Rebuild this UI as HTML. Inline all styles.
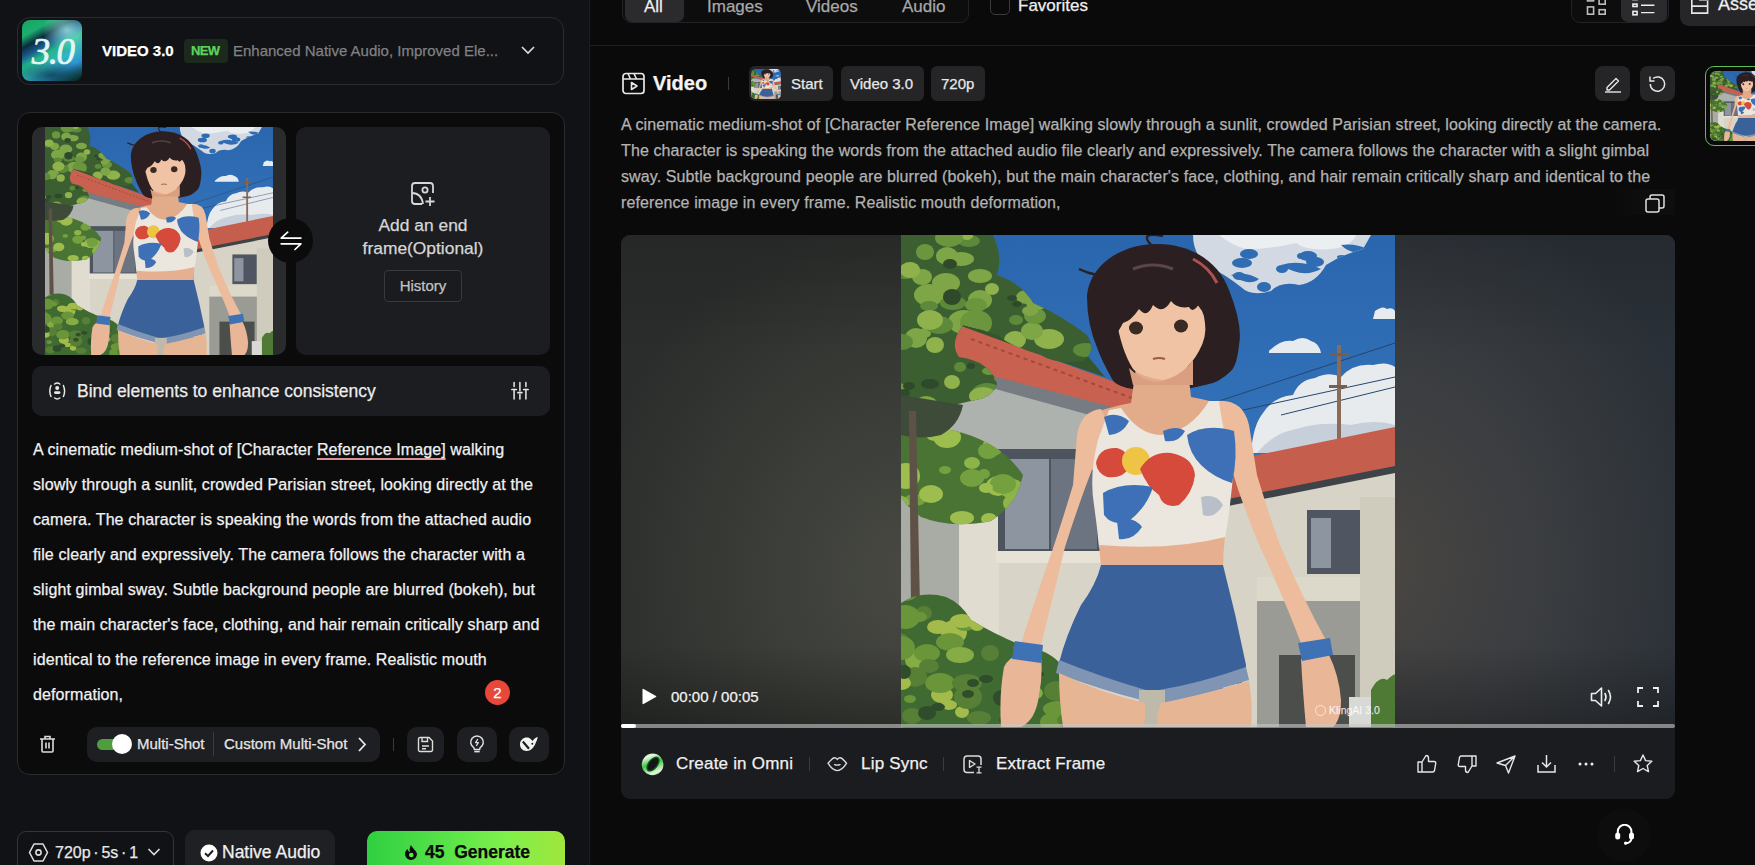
<!DOCTYPE html>
<html><head><meta charset="utf-8">
<style>
*{box-sizing:border-box;margin:0;padding:0}
html,body{width:1755px;height:865px;overflow:hidden;background:#0a0a0a;font-family:"Liberation Sans",sans-serif;color:#fff;-webkit-text-stroke:0.25px currentColor}
.a{position:absolute}
.t{white-space:nowrap;line-height:1}
#left{left:0;top:0;width:590px;height:865px;background:#111215;overflow:hidden}
#vsep{left:589px;top:0;width:1px;height:865px;background:#1d1e21}
svg{display:block}
.ib{background:#1e1f22;border-radius:10px}
</style></head><body>
<svg width="0" height="0" style="position:absolute">
<defs>
<symbol id="anime" viewBox="0 0 494 492" preserveAspectRatio="none">
  <defs>
    <linearGradient id="sky" x1="0" y1="0" x2="0" y2="1"><stop offset="0" stop-color="#2a66ae"/><stop offset="0.5" stop-color="#3474ba"/><stop offset="1" stop-color="#5a92c8"/></linearGradient>
  </defs>
  <rect width="494" height="492" fill="url(#sky)"/>
  <!-- top clouds -->
  <path d="M292 0 H470 L462 14 Q440 20 425 30 Q415 48 398 50 Q380 46 370 56 Q350 62 340 52 Q325 40 305 30 Q292 18 292 0 Z" fill="#d3d9e2"/>
  <path d="M318 0 H455 Q450 12 430 14 Q405 16 395 8 Q370 14 345 14 Q330 10 318 0 Z" fill="#eceff2"/>
  <clipPath id="cc1"><path d="M292 0 H470 L462 14 Q440 20 425 30 Q415 48 398 50 Q380 46 370 56 Q350 62 340 52 Q325 40 305 30 Q292 18 292 0 Z"/></clipPath><g clip-path="url(#cc1)"><path d="M330 40 Q345 36 358 44 Q348 52 330 40 Z M380 30 Q400 24 420 34 Q402 44 380 30 Z M440 10 Q455 8 466 14 Q452 22 440 10 Z" fill="#2f6cb3"/><ellipse cx="338" cy="41" rx="6" ry="4" fill="#2f6cb3"/><ellipse cx="400" cy="21" rx="4" ry="3" fill="#2f6cb3"/><ellipse cx="341" cy="28" rx="10" ry="5" fill="#2f6cb3"/><ellipse cx="434" cy="38" rx="8" ry="3" fill="#2f6cb3"/><ellipse cx="402" cy="54" rx="7" ry="4" fill="#2f6cb3"/><ellipse cx="407" cy="21" rx="9" ry="5" fill="#2f6cb3"/><ellipse cx="348" cy="19" rx="9" ry="5" fill="#2f6cb3"/><ellipse cx="415" cy="55" rx="8" ry="6" fill="#2f6cb3"/><ellipse cx="363" cy="52" rx="7" ry="5" fill="#2f6cb3"/><ellipse cx="441" cy="22" rx="5" ry="2" fill="#2f6cb3"/><ellipse cx="454" cy="36" rx="8" ry="4" fill="#2f6cb3"/><ellipse cx="381" cy="34" rx="6" ry="4" fill="#2f6cb3"/><ellipse cx="393" cy="56" rx="8" ry="5" fill="#2f6cb3"/><ellipse cx="437" cy="60" rx="8" ry="4" fill="#2f6cb3"/><ellipse cx="438" cy="59" rx="9" ry="5" fill="#2f6cb3"/><ellipse cx="414" cy="27" rx="9" ry="5" fill="#2f6cb3"/></g>
  <path d="M474 76 Q482 70 486 74 Q492 72 494 76 V84 H472 Z" fill="#e6ebf0"/>
  <path d="M368 116 Q380 104 392 106 Q402 100 410 106 Q418 108 420 118 H368 Z" fill="#e6ebf0"/>
  <!-- lower clouds -->
  <path d="M350 218 Q352 190 362 178 Q372 162 392 160 Q398 145 414 143 Q428 136 440 142 Q452 128 472 130 Q486 126 494 132 V218 Z" fill="#e8ebee"/>
  <path d="M356 218 Q372 198 395 194 Q420 186 450 190 Q475 184 494 190 V218 Z" fill="#c7d0da"/>
  <!-- wires & pole -->
  <path d="M300 172 L494 108 M310 182 L494 142 M380 180 L494 152" stroke="#26466e" stroke-width="1" fill="none"/>
  <rect x="436" y="110" width="4" height="98" fill="#8a6b58"/>
  <rect x="428" y="118" width="20" height="3" fill="#7a5e4d"/>
  <rect x="428" y="150" width="18" height="3" fill="#7a5e4d"/>
  <!-- right roof -->
  <path d="M322 227 L494 192 V236 L322 271 Z" fill="#c55e4d"/>
  <path d="M322 265 L494 231 V241 L322 275 Z" fill="#3e4347"/>
  <!-- right building -->
  <path d="M322 272 L494 238 V492 H322 Z" fill="#d7d3c6"/>
  <rect x="406" y="275" width="53" height="64" fill="#4f5661"/>
  <rect x="410" y="283" width="20" height="50" fill="#8d96a0"/>
  <rect x="459" y="262" width="35" height="230" fill="#cfcbbd"/>
  <rect x="356" y="342" width="103" height="24" fill="#dcd8ca"/>
  <rect x="356" y="366" width="103" height="126" fill="#9a9b95"/>
  <rect x="378" y="420" width="76" height="72" fill="#4c4e4c"/>
  <rect x="448" y="462" width="30" height="30" fill="#d8d8d4"/>
  <path d="M470 492 V455 Q478 440 486 445 Q494 438 494 440 V492 Z" fill="#4f7a35"/>
  <!-- left building -->
  <path d="M0 140 L250 178 V492 H0 Z" fill="#d8d5c8"/>
  <rect x="0" y="150" width="58" height="280" fill="#a9aba5"/>
  <rect x="58" y="150" width="40" height="300" fill="#e0ddd0"/>
  <path d="M0 148 L80 148 L250 190 V218 H0 Z" fill="#aeb2ae"/>
  <rect x="97" y="214" width="105" height="104" fill="#4d545e"/>
  <rect x="104" y="224" width="44" height="90" fill="#8c95a0"/>
  <rect x="150" y="224" width="46" height="90" fill="#6b7480"/>
  <rect x="95" y="316" width="112" height="12" fill="#e6e2d5"/>
  <path d="M48 80 L96 94 Q140 112 186 120 L204 142 L52 90 Z" fill="#34552e"/>
  <!-- left roof -->
  <path d="M52 88 L250 160 V184 L225 182 L40 126 Z" fill="#c8614f"/>
  <path d="M70 104 L250 170" stroke="#a4483b" stroke-width="2" stroke-dasharray="4 4"/>
  <path d="M80 138 L250 182 V192 L225 190 L80 150 Z" fill="#767c82"/>
  <!-- trees -->
  <clipPath id="tc1"><path d="M0 0 H92 Q102 22 96 40 Q120 48 132 68 Q160 80 186 100 Q196 116 182 126 Q155 130 140 120 Q112 112 96 100 Q80 94 62 90 Q48 108 58 122 Q88 126 96 148 Q94 162 70 166 Q45 172 0 182 Z"/></clipPath>
  <clipPath id="tc2"><path d="M0 196 Q30 188 62 198 Q102 210 122 240 Q116 270 90 286 Q50 294 20 282 Q6 272 0 262 Z"/></clipPath>
  <clipPath id="tc3"><path d="M0 368 Q20 355 45 362 Q60 368 70 385 Q95 400 120 410 Q150 415 162 432 V492 H0 Z"/></clipPath>
  <path d="M0 0 H92 Q102 22 96 40 Q120 48 132 68 Q160 80 186 100 Q196 116 182 126 Q155 130 140 120 Q112 112 96 100 Q80 94 62 90 Q48 108 58 122 Q88 126 96 148 Q94 162 70 166 Q45 172 0 182 Z" fill="#3c5f31"/>
  <g clip-path="url(#tc1)"><ellipse cx="60" cy="24" rx="13" ry="7" fill="#7fa646"/><ellipse cx="68" cy="6" rx="11" ry="6" fill="#5c8a3a"/><ellipse cx="79" cy="41" rx="12" ry="7" fill="#7fa646"/><ellipse cx="184" cy="115" rx="12" ry="7" fill="#5c8a3a"/><ellipse cx="5" cy="37" rx="12" ry="7" fill="#5c8a3a"/><ellipse cx="24" cy="17" rx="9" ry="8" fill="#6b963e"/><ellipse cx="16" cy="104" rx="8" ry="5" fill="#7fa646"/><ellipse cx="108" cy="113" rx="11" ry="8" fill="#8fb24c"/><ellipse cx="88" cy="170" rx="10" ry="6" fill="#6b963e"/><ellipse cx="135" cy="41" rx="12" ry="9" fill="#8fb24c"/><ellipse cx="141" cy="50" rx="16" ry="9" fill="#5c8a3a"/><ellipse cx="28" cy="60" rx="15" ry="11" fill="#7fa646"/><ellipse cx="148" cy="104" rx="15" ry="10" fill="#8fb24c"/><ellipse cx="114" cy="105" rx="11" ry="9" fill="#8fb24c"/><ellipse cx="90" cy="121" rx="7" ry="5" fill="#5c8a3a"/><ellipse cx="52" cy="68" rx="13" ry="7" fill="#5c8a3a"/><ellipse cx="66" cy="111" rx="11" ry="7" fill="#8fb24c"/><ellipse cx="21" cy="42" rx="10" ry="8" fill="#7fa646"/><ellipse cx="28" cy="71" rx="9" ry="5" fill="#5c8a3a"/><ellipse cx="168" cy="48" rx="10" ry="7" fill="#5c8a3a"/><ellipse cx="187" cy="24" rx="8" ry="5" fill="#6b963e"/><ellipse cx="-3" cy="153" rx="8" ry="5" fill="#6b963e"/><ellipse cx="79" cy="65" rx="12" ry="10" fill="#7fa646"/><ellipse cx="86" cy="160" rx="16" ry="12" fill="#5c8a3a"/><ellipse cx="75" cy="70" rx="11" ry="7" fill="#6b963e"/><ellipse cx="8" cy="35" rx="8" ry="5" fill="#7fa646"/><ellipse cx="15" cy="103" rx="11" ry="10" fill="#7fa646"/><ellipse cx="9" cy="35" rx="10" ry="8" fill="#8fb24c"/><ellipse cx="115" cy="85" rx="7" ry="5" fill="#5c8a3a"/><ellipse cx="91" cy="54" rx="7" ry="6" fill="#8fb24c"/><ellipse cx="91" cy="126" rx="11" ry="7" fill="#8fb24c"/><ellipse cx="24" cy="98" rx="6" ry="5" fill="#7fa646"/><ellipse cx="134" cy="45" rx="10" ry="6" fill="#6b963e"/><ellipse cx="102" cy="143" rx="9" ry="6" fill="#6b963e"/><ellipse cx="156" cy="150" rx="13" ry="8" fill="#5c8a3a"/><ellipse cx="66" cy="1" rx="6" ry="4" fill="#8fb24c"/><ellipse cx="34" cy="110" rx="9" ry="8" fill="#8fb24c"/><ellipse cx="186" cy="64" rx="8" ry="5" fill="#6b963e"/><ellipse cx="63" cy="87" rx="16" ry="12" fill="#7fa646"/><ellipse cx="91" cy="119" rx="14" ry="8" fill="#7fa646"/><ellipse cx="177" cy="144" rx="14" ry="10" fill="#6b963e"/><ellipse cx="82" cy="116" rx="7" ry="6" fill="#5c8a3a"/><ellipse cx="88" cy="136" rx="7" ry="4" fill="#6b963e"/><ellipse cx="1" cy="107" rx="11" ry="8" fill="#5c8a3a"/><ellipse cx="126" cy="62" rx="11" ry="7" fill="#7fa646"/><ellipse cx="155" cy="133" rx="7" ry="6" fill="#6b963e"/><ellipse cx="82" cy="161" rx="14" ry="9" fill="#8fb24c"/><ellipse cx="38" cy="90" rx="14" ry="9" fill="#5c8a3a"/><ellipse cx="162" cy="7" rx="13" ry="12" fill="#5c8a3a"/><ellipse cx="160" cy="162" rx="7" ry="4" fill="#7fa646"/><ellipse cx="170" cy="143" rx="12" ry="10" fill="#6b963e"/><ellipse cx="29" cy="85" rx="13" ry="10" fill="#8fb24c"/><ellipse cx="131" cy="96" rx="11" ry="9" fill="#7fa646"/><ellipse cx="45" cy="48" rx="14" ry="10" fill="#7fa646"/><ellipse cx="147" cy="168" rx="10" ry="8" fill="#6b963e"/><ellipse cx="134" cy="81" rx="11" ry="8" fill="#6b963e"/><ellipse cx="135" cy="162" rx="15" ry="10" fill="#6b963e"/><ellipse cx="163" cy="21" rx="7" ry="5" fill="#7fa646"/><ellipse cx="129" cy="76" rx="8" ry="5" fill="#7fa646"/><ellipse cx="174" cy="24" rx="13" ry="10" fill="#6b963e"/><ellipse cx="46" cy="21" rx="11" ry="9" fill="#7fa646"/><ellipse cx="75" cy="88" rx="16" ry="13" fill="#6b963e"/><ellipse cx="136" cy="184" rx="10" ry="7" fill="#8fb24c"/><ellipse cx="59" cy="132" rx="6" ry="5" fill="#5c8a3a"/><ellipse cx="136" cy="68" rx="11" ry="7" fill="#7fa646"/><ellipse cx="18" cy="170" rx="8" ry="7" fill="#7fa646"/><ellipse cx="48" cy="3" rx="14" ry="9" fill="#6b963e"/><ellipse cx="159" cy="156" rx="13" ry="11" fill="#5c8a3a"/><ellipse cx="25" cy="170" rx="12" ry="9" fill="#7fa646"/><ellipse cx="51" cy="147" rx="8" ry="7" fill="#8fb24c"/><ellipse cx="112" cy="122" rx="8" ry="5" fill="#2e4a2a"/><ellipse cx="3" cy="158" rx="6" ry="4" fill="#2e4a2a"/><ellipse cx="111" cy="63" rx="5" ry="3" fill="#2e4a2a"/><ellipse cx="112" cy="175" rx="5" ry="3" fill="#2e4a2a"/><ellipse cx="74" cy="105" rx="5" ry="4" fill="#2e4a2a"/><ellipse cx="29" cy="149" rx="9" ry="5" fill="#2e4a2a"/><ellipse cx="87" cy="108" rx="5" ry="4" fill="#2e4a2a"/><ellipse cx="8" cy="151" rx="6" ry="4" fill="#2e4a2a"/><ellipse cx="116" cy="69" rx="5" ry="3" fill="#2e4a2a"/><ellipse cx="99" cy="133" rx="7" ry="5" fill="#2e4a2a"/><ellipse cx="118" cy="154" rx="4" ry="3" fill="#2e4a2a"/><ellipse cx="49" cy="29" rx="7" ry="5" fill="#2e4a2a"/><ellipse cx="70" cy="131" rx="4" ry="3" fill="#2e4a2a"/><ellipse cx="51" cy="62" rx="9" ry="8" fill="#2e4a2a"/></g>
  <path d="M0 196 Q30 188 62 198 Q102 210 122 240 Q116 270 90 286 Q50 294 20 282 Q6 272 0 262 Z" fill="#4a7434"/>
  <g clip-path="url(#tc2)"><ellipse cx="27" cy="291" rx="8" ry="6" fill="#8db448"/><ellipse cx="39" cy="194" rx="8" ry="6" fill="#8db448"/><ellipse cx="61" cy="186" rx="8" ry="5" fill="#9dbd4e"/><ellipse cx="71" cy="228" rx="8" ry="6" fill="#8db448"/><ellipse cx="71" cy="243" rx="12" ry="9" fill="#74a040"/><ellipse cx="97" cy="251" rx="12" ry="10" fill="#9dbd4e"/><ellipse cx="14" cy="265" rx="11" ry="6" fill="#74a040"/><ellipse cx="111" cy="254" rx="12" ry="10" fill="#8db448"/><ellipse cx="113" cy="268" rx="11" ry="9" fill="#8db448"/><ellipse cx="102" cy="249" rx="13" ry="10" fill="#74a040"/><ellipse cx="79" cy="194" rx="6" ry="5" fill="#8db448"/><ellipse cx="44" cy="235" rx="6" ry="4" fill="#74a040"/><ellipse cx="83" cy="239" rx="6" ry="5" fill="#74a040"/><ellipse cx="116" cy="284" rx="7" ry="5" fill="#74a040"/><ellipse cx="91" cy="213" rx="7" ry="4" fill="#74a040"/><ellipse cx="93" cy="210" rx="11" ry="8" fill="#9dbd4e"/><ellipse cx="5" cy="285" rx="8" ry="5" fill="#74a040"/><ellipse cx="79" cy="194" rx="7" ry="5" fill="#74a040"/><ellipse cx="85" cy="253" rx="7" ry="5" fill="#9dbd4e"/><ellipse cx="30" cy="259" rx="12" ry="9" fill="#9dbd4e"/><ellipse cx="87" cy="216" rx="10" ry="8" fill="#74a040"/><ellipse cx="21" cy="293" rx="13" ry="8" fill="#9dbd4e"/><ellipse cx="5" cy="241" rx="14" ry="13" fill="#9dbd4e"/><ellipse cx="22" cy="289" rx="8" ry="6" fill="#8db448"/><ellipse cx="92" cy="214" rx="9" ry="7" fill="#74a040"/><ellipse cx="61" cy="283" rx="12" ry="7" fill="#9dbd4e"/><ellipse cx="46" cy="202" rx="14" ry="11" fill="#9dbd4e"/><ellipse cx="34" cy="200" rx="9" ry="6" fill="#9dbd4e"/><ellipse cx="-5" cy="268" rx="13" ry="8" fill="#8db448"/><ellipse cx="88" cy="284" rx="8" ry="6" fill="#9dbd4e"/></g>
  <path d="M0 160 Q30 165 62 170 Q58 190 40 200 Q20 205 0 200 Z" fill="#3e4b38"/>
  <path d="M8 176 L15 176 L19 372 H10 Z" fill="#5e5246"/>
  <path d="M0 368 Q20 355 45 362 Q60 368 70 385 Q95 400 120 410 Q150 415 162 432 V492 H0 Z" fill="#3f6a32"/>
  <g clip-path="url(#tc3)"><ellipse cx="61" cy="477" rx="7" ry="6" fill="#a2bb4a"/><ellipse cx="140" cy="394" rx="7" ry="5" fill="#86ac45"/><ellipse cx="37" cy="392" rx="11" ry="7" fill="#a2bb4a"/><ellipse cx="128" cy="415" rx="6" ry="5" fill="#577f35"/><ellipse cx="150" cy="487" rx="11" ry="9" fill="#6a9639"/><ellipse cx="154" cy="413" rx="12" ry="7" fill="#a2bb4a"/><ellipse cx="78" cy="483" rx="12" ry="7" fill="#577f35"/><ellipse cx="53" cy="397" rx="13" ry="12" fill="#a2bb4a"/><ellipse cx="64" cy="388" rx="11" ry="8" fill="#6a9639"/><ellipse cx="23" cy="378" rx="8" ry="7" fill="#577f35"/><ellipse cx="89" cy="418" rx="9" ry="8" fill="#577f35"/><ellipse cx="19" cy="382" rx="7" ry="5" fill="#6a9639"/><ellipse cx="49" cy="407" rx="14" ry="9" fill="#6a9639"/><ellipse cx="122" cy="413" rx="10" ry="7" fill="#577f35"/><ellipse cx="41" cy="460" rx="11" ry="8" fill="#a2bb4a"/><ellipse cx="16" cy="425" rx="12" ry="10" fill="#86ac45"/><ellipse cx="11" cy="481" rx="10" ry="8" fill="#577f35"/><ellipse cx="157" cy="474" rx="15" ry="8" fill="#6a9639"/><ellipse cx="67" cy="462" rx="14" ry="12" fill="#577f35"/><ellipse cx="-5" cy="410" rx="15" ry="13" fill="#577f35"/><ellipse cx="160" cy="390" rx="7" ry="4" fill="#6a9639"/><ellipse cx="155" cy="456" rx="12" ry="10" fill="#577f35"/><ellipse cx="9" cy="464" rx="6" ry="4" fill="#6a9639"/><ellipse cx="105" cy="398" rx="7" ry="5" fill="#577f35"/><ellipse cx="114" cy="371" rx="7" ry="5" fill="#86ac45"/><ellipse cx="61" cy="386" rx="12" ry="7" fill="#a2bb4a"/><ellipse cx="164" cy="394" rx="9" ry="8" fill="#86ac45"/><ellipse cx="76" cy="388" rx="8" ry="8" fill="#a2bb4a"/><ellipse cx="4" cy="382" rx="15" ry="12" fill="#6a9639"/><ellipse cx="39" cy="448" rx="15" ry="10" fill="#6a9639"/><ellipse cx="113" cy="456" rx="10" ry="7" fill="#6a9639"/><ellipse cx="131" cy="458" rx="11" ry="7" fill="#86ac45"/><ellipse cx="48" cy="470" rx="8" ry="5" fill="#a2bb4a"/><ellipse cx="14" cy="442" rx="12" ry="10" fill="#577f35"/><ellipse cx="66" cy="448" rx="15" ry="9" fill="#577f35"/><ellipse cx="4" cy="358" rx="12" ry="8" fill="#6a9639"/><ellipse cx="26" cy="418" rx="13" ry="9" fill="#6a9639"/><ellipse cx="165" cy="485" rx="9" ry="6" fill="#577f35"/><ellipse cx="0" cy="448" rx="10" ry="7" fill="#a2bb4a"/><ellipse cx="70" cy="370" rx="7" ry="4" fill="#577f35"/><ellipse cx="157" cy="372" rx="16" ry="10" fill="#a2bb4a"/><ellipse cx="126" cy="398" rx="14" ry="8" fill="#577f35"/><ellipse cx="28" cy="431" rx="10" ry="7" fill="#577f35"/><ellipse cx="0" cy="413" rx="14" ry="12" fill="#6a9639"/><ellipse cx="59" cy="420" rx="14" ry="8" fill="#86ac45"/><ellipse cx="105" cy="485" rx="7" ry="4" fill="#2f4d2b"/><ellipse cx="37" cy="472" rx="7" ry="4" fill="#2f4d2b"/><ellipse cx="101" cy="463" rx="9" ry="8" fill="#2f4d2b"/><ellipse cx="3" cy="437" rx="7" ry="7" fill="#2f4d2b"/><ellipse cx="111" cy="486" rx="9" ry="5" fill="#2f4d2b"/><ellipse cx="26" cy="478" rx="9" ry="7" fill="#2f4d2b"/><ellipse cx="85" cy="444" rx="7" ry="4" fill="#2f4d2b"/><ellipse cx="72" cy="448" rx="6" ry="4" fill="#2f4d2b"/><ellipse cx="67" cy="459" rx="6" ry="4" fill="#2f4d2b"/><ellipse cx="138" cy="439" rx="5" ry="3" fill="#2f4d2b"/></g>
  <!-- hair back -->
  <path d="M186 62 C188 30 220 9 256 9 C292 9 318 28 328 55 Q342 90 338 110 Q336 130 330 136 Q318 148 304 150 Q280 156 260 156 Q240 156 226 153 Q214 150 211 144 Q200 124 197 115 Q186 90 186 62 Z" fill="#2b1f21"/><path d="M252 12 Q236 -4 262 1 M196 40 Q186 38 178 34" fill="none" stroke="#2b1f21" stroke-width="2.5"/>
  <!-- neck & chest -->
  <path d="M237 118 H285 L290 162 Q312 166 330 172 L330 235 H185 V182 Q205 172 230 168 Z" fill="#e2ab89"/>
  <!-- arms -->
  <path d="M200 174 Q180 176 176 200 L172 250 Q160 290 149 322 Q132 370 118 415 L138 418 Q150 370 164 312 Q178 268 192 232 Q198 210 208 190 Z" fill="#ecbc9c"/>
  <path d="M316 166 Q342 164 348 190 L356 240 Q368 280 379 310 Q400 360 427 409 L403 416 Q382 360 359 312 Q342 272 330 232 Q324 200 318 180 Z" fill="#ecbc9c"/>
  <path d="M103 432 Q110 418 125 420 L140 422 Q142 440 138 460 Q135 485 120 492 H100 Q98 460 103 432 Z" fill="#e9b797"/>
  <path d="M400 424 L428 420 Q438 440 440 465 Q440 485 432 492 H405 Q402 460 400 424 Z" fill="#e9b797"/>
  <path d="M114 406 L142 410 L140 428 L111 424 Z" fill="#3f72b5"/>
  <path d="M397 408 L429 403 L432 420 L401 426 Z" fill="#3f72b5"/>
  <!-- face -->
  <path d="M215 82 Q215 60 258 58 Q303 60 304 88 Q306 102 298 116 Q285 140 262 145 Q240 142 232 134 Q220 115 215 82 Z" fill="#efc3a3"/>
  <path d="M228 133 Q245 150 262 146 Q280 142 292 125 L292 150 L232 150 Z" fill="#d99f80"/>
  <ellipse cx="235" cy="93" rx="7" ry="6.5" fill="#3a2a24"/>
  <ellipse cx="280" cy="91" rx="7" ry="6.5" fill="#3a2a24"/>
  <path d="M252 124 Q258 122 264 124" stroke="#9c5a4a" stroke-width="2" fill="none"/>
  <!-- bangs -->
  <path d="M190 70 C194 36 222 14 256 14 C296 14 318 34 328 60 L322 88 Q306 76 300 66 Q292 80 288 72 Q276 74 270 66 Q262 80 252 70 Q246 84 238 74 Q230 86 222 88 Q218 96 214 100 Z" fill="#2b1f21"/>
  <path d="M232 34 Q252 26 272 34" stroke="#5a4548" stroke-width="3" fill="none"/>
  <path d="M292 24 Q308 32 316 48" stroke="#b05050" stroke-width="3" fill="none"/>
  <!-- tank top -->
  <path d="M208 175 L220 173 Q238 200 260 200 Q290 196 308 166 L318 166 Q322 200 333 228 Q330 270 324 304 Q270 318 198 313 Q196 290 193 270 Q188 240 197 205 Z" fill="#ebe7df"/>
  <path d="M195 228 Q198 212 216 213 Q228 216 229 232 Q222 244 206 242 Q196 238 195 228 Z" fill="#d64a3c"/>
  <circle cx="235" cy="226" r="14" fill="#eec444"/>
  <path d="M239 234 Q250 216 270 218 Q292 222 294 240 Q292 258 278 270 Q262 274 258 260 Q246 252 239 234 Z" fill="#d64a3c"/>
  <path d="M202 258 Q222 246 252 252 Q246 272 228 286 Q212 292 203 280 Z" fill="#3d70b6"/>
  <path d="M286 200 Q305 188 333 196 Q337 222 331 248 Q312 242 300 230 Q288 218 286 200 Z" fill="#3d70b6"/>
  <path d="M203 182 Q216 176 228 186 Q222 199 208 200 Z" fill="#3d70b6"/>
  <path d="M262 196 Q276 190 284 196 Q278 208 264 206 Z" fill="#3d70b6"/>
  <path d="M216 286 Q232 280 241 292 Q232 306 218 304 Z" fill="#3d70b6"/>
  <path d="M300 262 Q315 258 322 270 Q314 284 302 280 Z" fill="#b9bfc8"/>
  <!-- midriff -->
  <path d="M198 310 Q270 316 324 302 Q322 318 322 332 H200 Z" fill="#e6b090"/>
  <!-- shorts -->
  <path d="M200 330 H322 Q335 380 345 430 Q345 445 340 448 Q300 455 258 466 L250 470 Q245 458 240 455 Q200 445 158 428 Q165 400 180 370 Q195 350 200 330 Z" fill="#3a6199"/>
  <path d="M158 425 Q200 442 245 455 L244 466 Q200 455 155 438 Z" fill="#7f95b3"/>
  <path d="M258 455 Q300 448 345 432 L348 445 Q300 460 260 468 Z" fill="#7f95b3"/>
  <!-- legs -->
  <rect x="238" y="455" width="26" height="37" fill="#bdb9ab"/>
  <path d="M158 438 Q200 458 244 468 Q245 480 243 492 H162 Q158 465 158 438 Z" fill="#e6b593"/>
  <path d="M260 468 Q300 460 348 446 Q352 470 350 492 H256 Q255 480 260 468 Z" fill="#e6b593"/>
</symbol>














</defs>
</svg>

<div id="left" class="a">
  <!-- model card -->
  <div class="a" style="left:17px;top:17px;width:547px;height:68px;border:1px solid #2b2c30;border-radius:13px;background:#111215"></div>
  <div class="a" id="logo" style="left:22px;top:20px;width:60px;height:61px;border-radius:8px;overflow:hidden;background:linear-gradient(150deg,#17a35c 0%,#1cae70 18%,#0b2c3c 30%,#1a5a8a 40%,#22b68a 50%,#33b6c4 64%,#2d92d2 78%,#0b3d37 94%,#072a26 100%)">
    <div class="a" style="left:20px;top:-10px;width:50px;height:40px;border-radius:50%;background:radial-gradient(closest-side,rgba(170,245,240,0.75),rgba(120,220,220,0))"></div>
    <div class="a" style="left:-10px;top:40px;width:80px;height:30px;background:radial-gradient(closest-side,rgba(0,30,30,0.6),rgba(0,30,30,0))"></div>
  </div>
  <div class="a t" style="left:22px;top:33px;width:61px;text-align:center;font-family:'Liberation Serif',serif;font-style:italic;font-size:37px;color:#e4f7f0;letter-spacing:-1.5px;-webkit-text-stroke:0.7px #e4f7f0">3.0</div>
  <div id="tv3" class="a t" style="left:102px;top:43px;font-size:15px;font-weight:bold;color:#fff">VIDEO 3.0</div>
  <div class="a" style="left:184px;top:39px;width:44px;height:24px;border-radius:4px;background:#1b2a1c"></div>
  <div id="tnew" class="a t" style="left:191px;top:44px;font-size:13px;font-weight:bold;color:#5fd35b;letter-spacing:-0.6px">NEW</div>
  <div id="tenh" class="a t" style="left:233px;top:43px;font-size:15px;color:#808184">Enhanced Native Audio, Improved Ele...</div>
  <svg class="a" style="left:520px;top:44px" width="16" height="12" viewBox="0 0 16 12"><path d="M2 3 L8 9 L14 3" fill="none" stroke="#ddd" stroke-width="1.6"/></svg>

  <!-- main card -->
  <div class="a" style="left:17px;top:112px;width:548px;height:663px;border:1px solid #2a2b2f;border-radius:13px;background:#0b0b0c"></div>
  <!-- start frame -->
  <div class="a" style="left:32px;top:127px;width:254px;height:228px;border-radius:10px;background:#2a2b2d;overflow:hidden">
    <svg class="a" style="left:13px;top:0" width="228" height="228"><use href="#anime"/></svg>
  </div>
  <!-- end frame -->
  <div class="a" style="left:296px;top:127px;width:254px;height:228px;border-radius:10px;background:#1c1d20"></div>
  <svg class="a" style="left:409px;top:180px" width="28" height="28" viewBox="0 0 28 28"><path d="M13 24 H6 a3 3 0 0 1 -3 -3 V6 a3 3 0 0 1 3 -3 H21 a3 3 0 0 1 3 3 V13" fill="none" stroke="#d8d8d8" stroke-width="1.8"/><path d="M3 13 C9 13 13 17 14 24" fill="none" stroke="#d8d8d8" stroke-width="1.8"/><circle cx="16" cy="10" r="2.6" fill="none" stroke="#d8d8d8" stroke-width="1.8"/><path d="M21 17 V26 M16.5 21.5 H25.5" stroke="#d8d8d8" stroke-width="1.8"/></svg>
  <div id="tadd1" class="a t" style="left:296px;width:254px;text-align:center;top:217px;font-size:17.4px;color:#d6d6d6">Add an end</div>
  <div id="tadd2" class="a t" style="left:296px;width:254px;text-align:center;top:240px;font-size:17.4px;color:#d6d6d6">frame(Optional)</div>
  <div class="a" style="left:384px;top:270px;width:78px;height:32px;border:1px solid #38393d;border-radius:4px;background:#1a1b1e"></div>
  <div id="thist" class="a t" style="left:384px;width:78px;text-align:center;top:278px;font-size:15px;color:#c2c2c2">History</div>
  <!-- swap -->
  <div class="a" style="left:268px;top:218px;width:45px;height:45px;border-radius:50%;background:#0b0b0c"></div>
  <svg class="a" style="left:280px;top:230px" width="22" height="22" viewBox="0 0 22 22"><path d="M1.2 8.1 H20.9 M1.2 8.1 L7.7 2.2 M1.2 13.8 H20.9 M20.9 13.8 L15 19.5" fill="none" stroke="#fff" stroke-width="1.7" stroke-linecap="round" stroke-linejoin="round"/></svg>

  <!-- bind bar -->
  <div class="a" style="left:32px;top:366px;width:518px;height:50px;border-radius:10px;background:#1c1d20"></div>
  <svg class="a" style="left:47px;top:379px" width="20" height="22" viewBox="0 0 20 22"><path d="M4 6.5 Q1.6 12 4 17.5 M16.4 6.5 Q18.8 12 16.4 17.5 M7.6 5 Q10.2 3.2 12.8 5 M7.6 19 Q10.2 20.8 12.8 19" fill="none" stroke="#e8e8e8" stroke-width="1.5" stroke-linecap="round"/><circle cx="10.2" cy="9.1" r="2" fill="#e8e8e8"/><rect x="7" y="12.2" width="6.4" height="2.8" rx="1.4" fill="#e8e8e8"/></svg>
  <div id="tbind" class="a t" style="left:77px;top:383px;font-size:17.5px;color:#ececec">Bind elements to enhance consistency</div>
  <svg class="a" style="left:510px;top:380px" width="20" height="22" viewBox="0 0 20 22"><path d="M4.1 2.5 V6.5 M4.1 9.6 V18.9 M15.9 2.5 V6.5 M15.9 9.6 V18.9 M9.9 2.5 V10.8 M9.9 14.4 V18.9" stroke="#dcdcdc" stroke-width="1.6" stroke-linecap="round"/><path d="M1.9 9.5 H6.3 M13.7 9.5 H18.1 M7.9 12.6 H11.9" stroke="#e8e8e8" stroke-width="1.7" stroke-linecap="round"/></svg>

  <!-- prompt -->
  <div id="tprompt" class="a" style="left:33px;top:432px;width:540px;font-size:16px;line-height:35px;color:#f2f2f2;letter-spacing:0.1px">A cinematic medium-shot of [Character <span style="text-decoration:underline;text-decoration-color:#d89292;text-decoration-thickness:1.6px;text-underline-offset:3px">Reference Image]</span> walking<br>slowly through a sunlit, crowded Parisian street, looking directly at the<br>camera. The character is speaking the words from the attached audio<br>file clearly and expressively. The camera follows the character with a<br>slight gimbal sway. Subtle background people are blurred (bokeh), but<br>the main character's face, clothing, and hair remain critically sharp and<br>identical to the reference image in every frame. Realistic mouth<br>deformation,</div>
  <div class="a" style="left:485px;top:680px;width:25px;height:25px;border-radius:50%;background:#e8483a"></div>
  <div class="a t" style="left:485px;width:25px;text-align:center;top:685px;font-size:15px;color:#fff">2</div>

  <!-- toolbar -->
  <svg class="a" style="left:39px;top:735px" width="17" height="18" viewBox="0 0 17 18"><path d="M1 4 H16 M6 4 V1.5 H11 V4 M3 4 V16 a1 1 0 0 0 1 1 H13 a1 1 0 0 0 1 -1 V4 M7 7.5 V13.5 M10 7.5 V13.5" fill="none" stroke="#ddd" stroke-width="1.6"/></svg>
  <div class="a ib" style="left:87px;top:727px;width:293px;height:35px"></div>
  <div class="a" style="left:97px;top:739px;width:30px;height:11px;border-radius:6px;background:#4f9d3e"></div>
  <div class="a" style="left:112px;top:734px;width:20px;height:20px;border-radius:50%;background:#fff"></div>
  <div id="tms" class="a t" style="left:137px;top:736px;font-size:15px;color:#e6e6e6">Multi-Shot</div>
  <div class="a" style="left:213px;top:732px;width:1px;height:24px;background:#3a3b3f"></div>
  <div id="tcms" class="a t" style="left:224px;top:736px;font-size:15px;color:#e6e6e6">Custom Multi-Shot</div>
  <svg class="a" style="left:357px;top:736px" width="10" height="17" viewBox="0 0 10 17"><path d="M2 2 L8 8.5 L2 15" fill="none" stroke="#e6e6e6" stroke-width="1.8"/></svg>
  <div class="a" style="left:393px;top:738px;width:1px;height:13px;background:#3a3b3f"></div>
  <div class="a ib" style="left:407px;top:727px;width:37px;height:35px"></div>
  <svg class="a" style="left:417px;top:736px" width="17" height="17" viewBox="0 0 17 17"><path d="M1.5 3 a1.5 1.5 0 0 1 1.5 -1.5 H12 L15.5 5 V14 a1.5 1.5 0 0 1 -1.5 1.5 H3 a1.5 1.5 0 0 1 -1.5 -1.5 Z M5 1.5 V5.5 H10.5 V1.5 M5 10 H12 M5 12.8 H9" fill="none" stroke="#ddd" stroke-width="1.4"/></svg>
  <div class="a ib" style="left:457px;top:727px;width:40px;height:35px"></div>
  <svg class="a" style="left:468px;top:735px" width="18" height="19" viewBox="0 0 18 19"><path d="M6 12.8 A6.3 6.3 0 1 1 12 12.8 L11.6 14.6 H6.4 Z" fill="none" stroke="#e0e0e0" stroke-width="1.5" stroke-linejoin="round"/><path d="M6.3 16.6 H11.7" stroke="#e0e0e0" stroke-width="1.6"/><path d="M9.8 4 L7.6 7.6 H10.4 L8.2 11" fill="none" stroke="#e0e0e0" stroke-width="1.3" stroke-linejoin="round"/></svg>
  <div class="a ib" style="left:509px;top:727px;width:40px;height:35px"></div>
  <svg class="a" style="left:519px;top:736px" width="20" height="16" viewBox="0 0 20 16"><path d="M1 8.5 C1 3.5 5 0.8 9 1.5 C11 2 12.5 3.5 13.5 5 C14.5 3.8 16 2 18.8 0.8 C18.2 2.6 18.5 4 17 6 C16 10 12.5 15 7.5 15 C3.5 15 1 12 1 8.5 Z" fill="#f2f2f2"/><path d="M3.8 5.5 L10 12.8" stroke="#1e1f22" stroke-width="2.2"/><circle cx="13.3" cy="7.8" r="1" fill="#1e1f22"/></svg>

  <!-- bottom bar -->
  <div class="a" style="left:17px;top:831px;width:157px;height:50px;border:1px solid #34353a;border-radius:9px"></div>
  <svg class="a" style="left:28px;top:842px" width="21" height="21" viewBox="0 0 21 21"><path d="M6 2 H15 L19.5 10.5 L15 19 H6 L1.5 10.5 Z" fill="none" stroke="#ddd" stroke-width="1.6" stroke-linejoin="round"/><circle cx="10.5" cy="10.5" r="2.6" fill="none" stroke="#ddd" stroke-width="1.6"/></svg>
  <div id="t720" class="a t" style="left:55px;top:845px;font-size:16px;color:#e8e8e8;word-spacing:-1.7px">720p · 5s · 1</div>
  <svg class="a" style="left:147px;top:847px" width="14" height="10" viewBox="0 0 14 10"><path d="M1.5 2 L7 7.5 L12.5 2" fill="none" stroke="#ddd" stroke-width="1.6"/></svg>
  <div class="a" style="left:185px;top:830px;width:150px;height:50px;border-radius:10px;background:#1f2023"></div>
  <svg class="a" style="left:200px;top:844px" width="18" height="18" viewBox="0 0 18 18"><circle cx="9" cy="9" r="8.5" fill="#fff"/><path d="M5 9.2 L8 12 L13 6.5" fill="none" stroke="#1f2023" stroke-width="2"/></svg>
  <div id="tna" class="a t" style="left:222px;top:844px;font-size:17.5px;color:#f0f0f0">Native Audio</div>
  <div class="a" style="left:367px;top:831px;width:198px;height:50px;border-radius:10px;background:linear-gradient(90deg,#2fcf41 0%,#5ee54a 45%,#7ff04b 70%,#a0e63c 100%)"></div>
  <svg class="a" style="left:404px;top:844px" width="15" height="17" viewBox="0 0 15 17"><path d="M7 1 C8 4 12 6 13 10 A6 6 0 0 1 1 10 C1 8 2 6 3.5 5 C4 7 5 8 6 8 C5 5 6 2.5 7 1 Z" fill="#0a0a0a"/><circle cx="7.3" cy="11" r="2.3" fill="#5ee54a"/></svg>
  <div id="tgen" class="a t" style="left:425px;top:844px;font-size:17.5px;font-weight:bold;color:#0a0a0a">45&nbsp; Generate</div>
</div>

<div id="right" class="a" style="left:590px;top:0;width:1165px;height:865px;background:#0a0a0a">
</div>
<!-- top tabs -->
<div class="a" style="left:622px;top:-12px;width:347px;height:35px;border:1px solid #222326;border-radius:9px;background:#0d0d0e"></div>
<div class="a" style="left:625px;top:-10px;width:59px;height:32px;border-radius:7px;background:#2b2b2d"></div>
<div id="tall" class="a t" style="left:644px;top:-2px;font-size:17px;color:#f0f0f0">All</div>
<div id="timg" class="a t" style="left:707px;top:-2px;font-size:17px;color:#a8a8a8">Images</div>
<div id="tvid" class="a t" style="left:806px;top:-2px;font-size:17px;color:#a8a8a8">Videos</div>
<div id="taud" class="a t" style="left:902px;top:-2px;font-size:17px;color:#a8a8a8">Audio</div>
<div class="a" style="left:990px;top:-6px;width:20px;height:21px;border:1.5px solid #3a3b3e;border-radius:5px"></div>
<div id="tfav" class="a t" style="left:1018px;top:-3px;font-size:17px;color:#f0f0f0">Favorites</div>
<div class="a" style="left:1571px;top:-12px;width:98px;height:35px;border:1px solid #222326;border-radius:9px;background:#0d0d0e"></div>
<div class="a" style="left:1621px;top:-10px;width:46px;height:32px;border-radius:7px;background:#2b2b2d"></div>
<svg class="a" style="left:1585px;top:-6px" width="23" height="22" viewBox="0 0 23 22"><rect x="2.5" y="-2" width="6.1" height="8.9" fill="none" stroke="#bdbdbd" stroke-width="1.6"/><rect x="14.1" y="-2" width="6.1" height="12.2" fill="none" stroke="#bdbdbd" stroke-width="1.6"/><rect x="2.5" y="12.9" width="6.1" height="7.3" fill="none" stroke="#bdbdbd" stroke-width="1.6"/><rect x="14.1" y="15.7" width="6.1" height="4.5" fill="none" stroke="#bdbdbd" stroke-width="1.6"/></svg>
<svg class="a" style="left:1632px;top:-6px" width="24" height="22" viewBox="0 0 24 22"><rect x="0.95" y="1" width="4.1" height="4.6" fill="none" stroke="#eee" stroke-width="1.6"/><rect x="0.95" y="10.1" width="4.1" height="2.4" fill="none" stroke="#eee" stroke-width="1.6"/><rect x="0.95" y="17.4" width="4.1" height="3.4" fill="none" stroke="#eee" stroke-width="1.6"/><path d="M9 11.3 H22.4 M9 18.6 H22.4" stroke="#eee" stroke-width="1.4"/></svg>
<div class="a" style="left:1680px;top:-12px;width:120px;height:38px;border-radius:9px;background:#262628"></div>
<svg class="a" style="left:1690px;top:-6px" width="20" height="21" viewBox="0 0 20 21"><path d="M1.8 -2 V19.1 H17.6 V-2 M1.8 12.1 H17.6" fill="none" stroke="#e6e6e6" stroke-width="1.6"/><rect x="9" y="4" width="9" height="3" fill="#9a9a9a"/></svg>
<div id="tass" class="a t" style="left:1718px;top:-5px;font-size:18px;color:#f0f0f0">Assets</div>
<div class="a" style="left:590px;top:45px;width:1165px;height:1px;background:#1d1e20"></div>

<!-- header -->
<svg class="a" style="left:622px;top:72px" width="23" height="23" viewBox="0 0 23 23"><rect x="1" y="1.5" width="21" height="20" rx="3" fill="none" stroke="#e8e8e8" stroke-width="1.7"/><path d="M1 7 H22 M6 1.5 L8.5 7 M12 1.5 L14.5 7" fill="none" stroke="#e8e8e8" stroke-width="1.6"/><path d="M9.5 10.5 V17.5 L15 14 Z" fill="none" stroke="#e8e8e8" stroke-width="1.6" stroke-linejoin="round"/></svg>
<div id="tvideo" class="a t" style="left:653px;top:73px;font-size:20px;font-weight:bold;color:#f4f4f4">Video</div>
<div class="a" style="left:728px;top:77px;width:1px;height:13px;background:#3a3a3c"></div>
<div class="a" style="left:749px;top:66px;width:84px;height:35px;border-radius:6px;background:#252527"></div>
<div class="a" style="left:751px;top:69px;width:30px;height:30px;border-radius:5px;overflow:hidden"><svg class="a" style="left:-4px;top:0" width="38" height="30"><use href="#anime"/></svg></div>
<div id="tstart" class="a t" style="left:791px;top:76px;font-size:15px;color:#e8e8e8">Start</div>
<div class="a" style="left:841px;top:66px;width:83px;height:35px;border-radius:6px;background:#252527"></div>
<div id="tv30" class="a t" style="left:850px;top:76px;font-size:15px;color:#e8e8e8">Video 3.0</div>
<div class="a" style="left:931px;top:66px;width:54px;height:35px;border-radius:6px;background:#252527"></div>
<div id="t720b" class="a t" style="left:941px;top:76px;font-size:15px;color:#e8e8e8">720p</div>
<div class="a" style="left:1595px;top:66px;width:35px;height:35px;border-radius:8px;background:#252527"></div>
<svg class="a" style="left:1604px;top:75px" width="18" height="18" viewBox="0 0 18 18"><path d="M3 12.5 L12 3.5 L14.5 6 L5.5 15 H3 Z" fill="none" stroke="#e6e6e6" stroke-width="1.4" stroke-linejoin="round"/><path d="M1 17 H17" stroke="#e6e6e6" stroke-width="1.4"/></svg>
<div class="a" style="left:1640px;top:66px;width:35px;height:35px;border-radius:8px;background:#252527"></div>
<svg class="a" style="left:1648px;top:75px" width="19" height="18" viewBox="0 0 19 18"><path d="M5 3.5 A7.2 7.2 0 1 1 2.3 9" fill="none" stroke="#e6e6e6" stroke-width="1.5"/><path d="M2 1.5 V6 H6.5" fill="none" stroke="#e6e6e6" stroke-width="1.5"/></svg>
<div class="a" style="left:1705px;top:66px;width:70px;height:80px;border:1.5px solid #5dbf55;border-radius:9px"></div>
<div class="a" style="left:1710px;top:71px;width:62px;height:70px;border-radius:6px;overflow:hidden">
  <svg class="a" style="left:0;top:0" width="70" height="70"><use href="#anime"/></svg>
</div>

<!-- description -->
<div id="tdesc" class="a" style="left:621px;top:112px;width:1060px;font-size:16px;line-height:26px;color:#b3b3b3;letter-spacing:0.11px">A cinematic medium-shot of [Character Reference Image] walking slowly through a sunlit, crowded Parisian street, looking directly at the camera.<br>The character is speaking the words from the attached audio file clearly and expressively. The camera follows the character with a slight gimbal<br>sway. Subtle background people are blurred (bokeh), but the main character's face, clothing, and hair remain critically sharp and identical to the<br>reference image in every frame. Realistic mouth deformation,</div>
<div class="a" style="left:1612px;top:189px;width:63px;height:26px;background:linear-gradient(90deg,rgba(10,10,10,0),#0e0e0f 50%)"></div>
<svg class="a" style="left:1645px;top:194px" width="20" height="19" viewBox="0 0 20 19"><rect x="1" y="5" width="13" height="13" rx="2" fill="none" stroke="#e0e0e0" stroke-width="1.5"/><path d="M5 5 V3 a2 2 0 0 1 2 -2 H17 a2 2 0 0 1 2 2 V12 a2 2 0 0 1 -2 2 H14" fill="none" stroke="#e0e0e0" stroke-width="1.5"/></svg>

<!-- video -->
<div class="a" style="left:621px;top:235px;width:1054px;height:564px;border-radius:9px;background:#1b1c1f;overflow:hidden">
  <div class="a" style="left:0;top:0;width:282px;height:493px;background:radial-gradient(ellipse 330px 360px at 290px 340px,#484943 0%,#3b3d38 45%,#2a2d2b 100%)"></div>
  <div class="a" style="left:772px;top:0;width:282px;height:493px;background:radial-gradient(ellipse 340px 400px at -20px 330px,#4a4642 0%,#3c3e41 45%,#2a3037 100%)"></div>
  <div class="a" style="left:0;top:0;width:1054px;height:120px;background:linear-gradient(180deg,rgba(0,0,0,0.12),rgba(0,0,0,0))"></div>
  <svg class="a" style="left:280px;top:0" width="494" height="492"><use href="#anime"/></svg>
  <div class="a" style="left:0;top:410px;width:280px;height:83px;background:linear-gradient(180deg,rgba(0,0,0,0),rgba(0,0,0,0.28))"></div><div class="a" style="left:774px;top:410px;width:280px;height:83px;background:linear-gradient(180deg,rgba(0,0,0,0),rgba(0,0,0,0.28))"></div>
  <div class="a" style="left:0;top:489px;width:1054px;height:4px;border-radius:2px;background:rgba(200,200,200,0.6)"></div>
  <div class="a" style="left:0;top:489px;width:15px;height:4px;border-radius:2px;background:#fff"></div>
</div>
<svg class="a" style="left:641px;top:688px" width="16" height="17" viewBox="0 0 16 17"><path d="M1.5 1.5 Q1.5 0.5 2.5 1 L15 8 Q15.8 8.5 15 9 L2.5 16 Q1.5 16.5 1.5 15.5 Z" fill="#fff"/></svg>
<div id="ttime" class="a t" style="left:671px;top:689px;font-size:15px;color:#f2f2f2">00:00 / 00:05</div>
<svg class="a" style="left:1590px;top:686px" width="25" height="22" viewBox="0 0 25 22"><path d="M1.5 7.5 H5.5 L11.5 2 V20 L5.5 14.5 H1.5 Z" fill="none" stroke="#eee" stroke-width="1.6" stroke-linejoin="round"/><path d="M15 7.5 Q17 11 15 14.5 M18.5 4.5 Q22.5 11 18.5 17.5" fill="none" stroke="#eee" stroke-width="1.6" stroke-linecap="round"/></svg>
<svg class="a" style="left:1637px;top:687px" width="22" height="20" viewBox="0 0 22 20"><path d="M1 6 V1 H6 M16 1 H21 V6 M21 14 V19 H16 M6 19 H1 V14" fill="none" stroke="#eee" stroke-width="1.8"/></svg>
<div class="a t" style="left:1315px;top:705px;font-size:10.5px;color:rgba(255,255,255,0.75)" id="twm"><span style="display:inline-block;width:11px;height:11px;border:1px solid rgba(255,255,255,0.6);border-radius:50%;vertical-align:-2px;margin-right:3px"></span>KlingAI 3.0</div>

<!-- action bar -->
<svg class="a" style="left:640px;top:752px" width="24" height="24" viewBox="0 0 24 24"><defs><linearGradient id="og" x1="0.3" y1="0" x2="0.7" y2="1"><stop offset="0" stop-color="#b8eeb0"/><stop offset="0.12" stop-color="#eaf8e4"/><stop offset="0.45" stop-color="#40c443"/><stop offset="0.88" stop-color="#e6f6de"/><stop offset="1" stop-color="#8fd88a"/></linearGradient></defs><circle cx="12.6" cy="12.4" r="10.8" fill="url(#og)"/><ellipse cx="13" cy="12.1" rx="8" ry="4.3" transform="rotate(-52 13 12.1)" fill="#15161a" stroke="#0d5a14" stroke-width="1.3"/></svg>
<div id="tomni" class="a t" style="left:676px;top:755px;font-size:17px;color:#f0f0f0;letter-spacing:0.2px">Create in Omni</div>
<div class="a" style="left:809px;top:757px;width:1px;height:14px;background:#3a3b3e"></div>
<svg class="a" style="left:827px;top:756px" width="21" height="16" viewBox="0 0 21 16"><path d="M1 7.2 C3.5 5 5.2 1.8 7.6 1.8 C9 1.8 9.8 2.8 10.3 3.4 C10.8 2.8 11.6 1.8 13 1.8 C15.4 1.8 17.2 5 19.6 7.2 C17 11.5 14 14.6 10.3 14.6 C6.6 14.6 3.6 11.5 1 7.2 Z" fill="none" stroke="#dcdcdc" stroke-width="1.4" stroke-linejoin="round"/><path d="M7.6 8.6 Q10.3 9.6 13 8.6" fill="none" stroke="#dcdcdc" stroke-width="1.4" stroke-linecap="round"/></svg>
<div id="tlip" class="a t" style="left:861px;top:755px;font-size:17px;color:#f0f0f0;letter-spacing:0.2px">Lip Sync</div>
<div class="a" style="left:943px;top:757px;width:1px;height:14px;background:#3a3b3e"></div>
<svg class="a" style="left:963px;top:755px" width="20" height="19" viewBox="0 0 20 19"><path d="M11 17.6 H4 a3 3 0 0 1 -3 -3 V4 a3 3 0 0 1 3 -3 H15 a3 3 0 0 1 3 3 V10" fill="none" stroke="#dcdcdc" stroke-width="1.5"/><path d="M6.5 5.5 V12.5 L12 9 Z" fill="none" stroke="#dcdcdc" stroke-width="1.4" stroke-linejoin="round"/><path d="M13.5 12.2 H18.5 M16 12.2 V17.8 M13.5 17.8 H18.5" stroke="#dcdcdc" stroke-width="1.3"/></svg>
<div id="text" class="a t" style="left:996px;top:755px;font-size:17px;color:#f0f0f0;letter-spacing:0.2px">Extract Frame</div>
<svg class="a" style="left:1417px;top:754px" width="20" height="19" viewBox="0 0 20 19"><path d="M1 8 H5 V18 H1 Z M5 8 L9 1.5 Q11.5 1.5 11.5 4 V7.5 H17 Q19 7.5 18.7 9.5 L17.5 16.5 Q17.2 18 15.5 18 H5" fill="none" stroke="#e6e6e6" stroke-width="1.4" stroke-linejoin="round"/></svg>
<svg class="a" style="left:1457px;top:755px" width="20" height="19" viewBox="0 0 20 19"><path d="M19 11 H15 V1 H19 Z M15 11 L11 17.5 Q8.5 17.5 8.5 15 V11.5 H3 Q1 11.5 1.3 9.5 L2.5 2.5 Q2.8 1 4.5 1 H15" fill="none" stroke="#e6e6e6" stroke-width="1.4" stroke-linejoin="round"/></svg>
<svg class="a" style="left:1496px;top:755px" width="20" height="19" viewBox="0 0 20 19"><path d="M1 8 L19 1 L12.5 18 L9.5 10.5 Z M9.5 10.5 L19 1" fill="none" stroke="#e6e6e6" stroke-width="1.4" stroke-linejoin="round"/></svg>
<svg class="a" style="left:1537px;top:754px" width="19" height="19" viewBox="0 0 19 19"><path d="M1 11 V18 H18 V11 M9.5 1 V13 M5 8.5 L9.5 13 L14 8.5" fill="none" stroke="#e6e6e6" stroke-width="1.5"/></svg>
<svg class="a" style="left:1578px;top:762px" width="16" height="4" viewBox="0 0 16 4"><circle cx="2" cy="2" r="1.5" fill="#eee"/><circle cx="8" cy="2" r="1.5" fill="#eee"/><circle cx="14" cy="2" r="1.5" fill="#eee"/></svg>
<div class="a" style="left:1614px;top:756px;width:1px;height:16px;background:#3a3b3e"></div>
<svg class="a" style="left:1633px;top:754px" width="20" height="19" viewBox="0 0 20 19"><path d="M10 1 L12.6 6.6 L18.8 7.3 L14.2 11.5 L15.5 17.6 L10 14.5 L4.5 17.6 L5.8 11.5 L1.2 7.3 L7.4 6.6 Z" fill="none" stroke="#e6e6e6" stroke-width="1.4" stroke-linejoin="round"/></svg>
<div class="a" style="left:1597px;top:808px;width:54px;height:54px;border-radius:50%;background:#0d0d0e"></div>
<svg class="a" style="left:1613px;top:824px" width="23" height="21" viewBox="0 0 23 21"><path d="M4.8 11 V7.6 A6.8 6.8 0 0 1 18.4 7.6 V11" fill="none" stroke="#fff" stroke-width="2"/><rect x="2.2" y="8.6" width="5" height="7" rx="2.5" fill="#fff"/><rect x="16" y="8.6" width="5" height="7" rx="2.5" fill="#fff"/><path d="M18.4 14.5 Q18 19 12.8 19.2" fill="none" stroke="#fff" stroke-width="2"/><circle cx="12.6" cy="19.2" r="1.6" fill="#fff"/></svg>

<div id="vsep" class="a"></div>
</body></html>
